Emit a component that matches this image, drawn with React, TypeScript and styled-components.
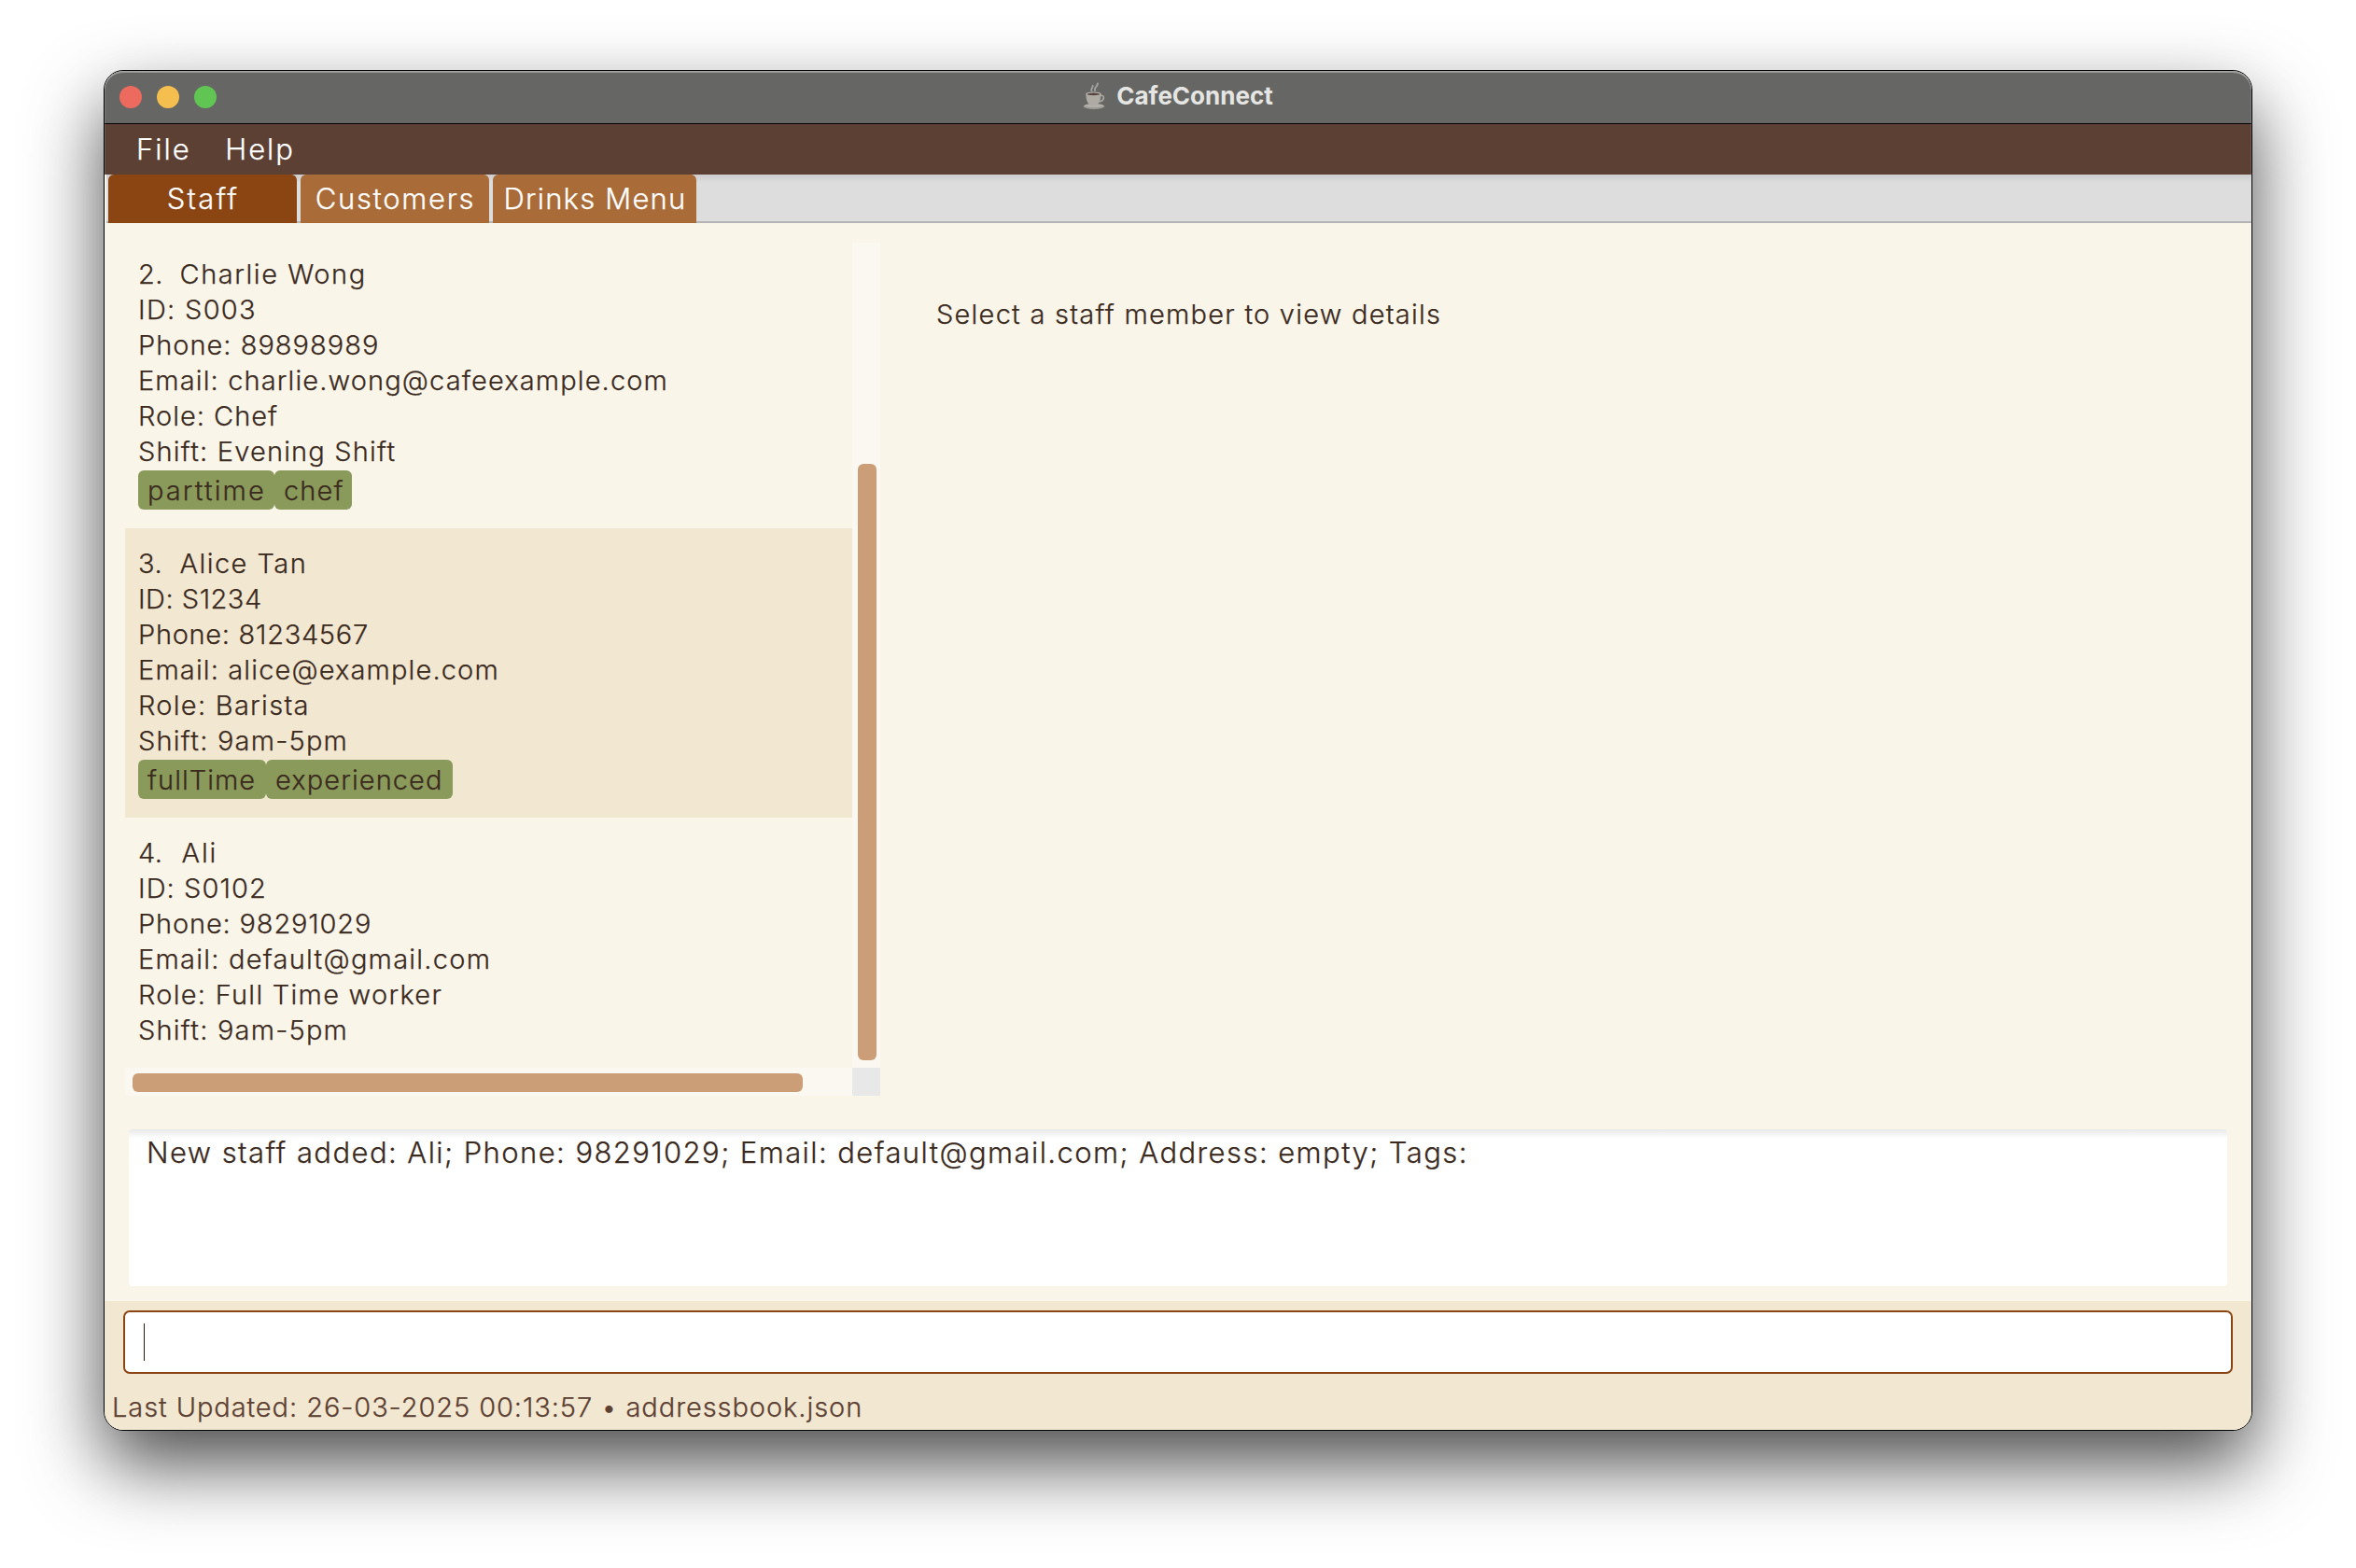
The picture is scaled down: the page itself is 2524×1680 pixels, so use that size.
import React from "react";
import styled, { createGlobalStyle } from "styled-components";

const GlobalStyle = createGlobalStyle`
  * { box-sizing: border-box; }
  body {
    margin: 0;
    background: #ffffff;
    font-family: Inter, "Liberation Sans", sans-serif;
    font-weight: 300;
    -webkit-text-stroke: 0.25px currentColor;
    color: #3b2a1e;
    overflow: hidden;
  }
`;

const Desktop = styled.div`
  width: 2524px;
  height: 1680px;
  padding: 75px 111px 0;
`;

const Window = styled.main`
  position: relative;
  display: flex;
  flex-direction: column;
  width: 2302px;
  height: 1458px;
  border: 1px solid #000000;
  border-radius: 21px;
  background: #faf5e9;
  overflow: hidden;
  box-shadow: 0 36px 80px rgba(0, 0, 0, 0.7);

  &::after {
    content: "";
    position: absolute;
    inset: 0;
    border-radius: 20px;
    box-shadow: inset 0 2px 0 rgba(255, 255, 255, 0.3), inset 0 0 0 1px rgba(255, 255, 255, 0.16);
    pointer-events: none;
  }
`;

const TitleBar = styled.header`
  display: grid;
  grid-template-columns: 1fr auto 1fr;
  align-items: center;
  height: 57px;
  padding: 0 16px;
  background: #666764;
  border-bottom: 1px solid #000000;
`;

const Lights = styled.div`
  display: flex;
  gap: 16px;
`;

const Light = styled.span<{ $color: string }>`
  width: 24px;
  height: 24px;
  border-radius: 50%;
  background: ${(p) => p.$color};
`;

const Title = styled.h1`
  display: flex;
  align-items: center;
  gap: 11px;
  margin: 0;
  height: 56px;
  padding-bottom: 2px;
  font-size: 26px;
  font-weight: 700;
  line-height: 54px;
  color: #e5e5e3;
  -webkit-text-stroke: 0;
`;

const MenuBar = styled.nav`
  display: flex;
  gap: 36.5px;
  height: 54px;
  padding-left: 34px;
  background: #5c4033;
  color: #ffffff;
`;

const MenuItem = styled.span<{ $track: number }>`
  font-size: 31px;
  line-height: 53px;
  letter-spacing: ${(p) => p.$track}px;
`;

const TabHeader = styled.div`
  display: flex;
  gap: 4px;
  height: 52px;
  margin-left: 2px;
  padding-left: 2px;
  background:
    linear-gradient(#b4b4b4, #b4b4b4) bottom / 100% 2px no-repeat,
    linear-gradient(#cdcdcd, #dddddd 9px);
`;

const Tab = styled.div<{ $width: number; $track: number; $active?: boolean }>`
  width: ${(p) => p.$width}px;
  padding-left: 1px;
  border-radius: 6px 6px 0 0;
  background: ${(p) => (p.$active ? "#8b4513" : "#a96b38")};
  color: #ffffff;
  font-size: 31px;
  line-height: 51px;
  letter-spacing: ${(p) => p.$track}px;
  text-align: center;
`;

const Content = styled.section`
  display: flex;
  height: 935px;
  padding: 21px 22px 0;
`;

const ListPane = styled.div`
  display: grid;
  grid-template-columns: 779px 30px;
  grid-template-rows: 884px 30px;
`;

const Viewport = styled.div`
  overflow: hidden;
`;

const ListBody = styled.div`
  margin-top: -4px;
`;

const Card = styled.article<{ $shaded?: boolean }>`
  height: 310px;
  padding: 19px 14px 0;
  background: ${(p) => (p.$shaded ? "#f2e7d0" : "transparent")};
`;

const Line = styled.div<{ $track: number }>`
  display: flex;
  height: 38px;
  font-size: 29px;
  line-height: 38px;
  letter-spacing: ${(p) => p.$track}px;
  white-space: pre;
`;

const Index = styled.span<{ $width: number }>`
  width: ${(p) => p.$width}px;
  letter-spacing: 0.5px;
`;

const Tags = styled.div`
  display: flex;
  margin-top: 1px;
`;

const Tag = styled.span<{ $width: number; $track: number }>`
  width: ${(p) => p.$width}px;
  height: 42px;
  padding-left: 10px;
  border-radius: 6px;
  background: #8a9a5b;
  font-size: 29px;
  line-height: 43px;
  letter-spacing: ${(p) => p.$track}px;
`;

const VerticalTrack = styled.div`
  padding: 237px 4px 8px 6px;
  background: #fbf8f1;
`;

const HorizontalTrack = styled.div`
  padding: 6px 53px 4px 8px;
  background: #fbf8f1;
`;

const Thumb = styled.div`
  width: 100%;
  height: 100%;
  border-radius: 6px;
  background: #cc9e78;
`;

const Corner = styled.div`
  background: #e8e8e8;
`;

const Detail = styled.p`
  margin: 58px 0 0 60px;
  font-size: 29px;
  line-height: 38px;
  letter-spacing: 1.24px;
`;

const ResultArea = styled.section`
  height: 220px;
  padding: 36px 26px 16px;
`;

const ResultBox = styled.div`
  height: 168px;
  padding: 5px 19px;
  border-radius: 4px;
  background: linear-gradient(#e9e9eb, #ffffff 10px);
  font-size: 31px;
  line-height: 40px;
  letter-spacing: 1.43px;
`;

const Footer = styled.footer`
  flex: 1;
  padding: 10px 20px 0;
  background: #f2e7d0;
`;

const CommandBox = styled.div`
  display: flex;
  align-items: center;
  height: 68px;
  padding-left: 20px;
  border: 2px solid #8b4513;
  border-radius: 7px;
  background: #ffffff;
`;

const Caret = styled.span`
  width: 1px;
  height: 40px;
  background: #2b1a10;
`;

const Status = styled.p`
  margin: 17px 0 0 -12px;
  font-size: 29px;
  line-height: 38px;
  letter-spacing: 0.92px;
  color: #5c4033;
`;

type Text = [string, number];
interface Staff {
  index: string;
  indexWidth: number;
  name: Text;
  lines: Text[];
  tags: [string, number, number][];
}

const staff: Staff[] = [
  {
    index: "2.",
    indexWidth: 44.5,
    name: ["Charlie Wong", 1.55],
    lines: [
      ["ID: S003", 1.3],
      ["Phone: 89898989", 1.0],
      ["Email: charlie.wong@cafeexample.com", 1.11],
      ["Role: Chef", 1.0],
      ["Shift: Evening Shift", 1.18],
    ],
    tags: [
      ["parttime", 146, 2.1],
      ["chef", 83, 1.1],
    ],
  },
  {
    index: "3.",
    indexWidth: 44.5,
    name: ["Alice Tan", 1.46],
    lines: [
      ["ID: S1234", 0.5],
      ["Phone: 81234567", 0.7],
      ["Email: alice@example.com", 1.13],
      ["Role: Barista", 1.28],
      ["Shift: 9am-5pm", 1.2],
    ],
    tags: [
      ["fullTime", 137, 1.03],
      ["experienced", 200, 1.08],
    ],
  },
  {
    index: "4.",
    indexWidth: 46.5,
    name: ["Ali", 1.9],
    lines: [
      ["ID: S0102", 1.08],
      ["Phone: 98291029", 0.84],
      ["Email: default@gmail.com", 1.24],
      ["Role: Full Time worker", 1.26],
      ["Shift: 9am-5pm", 1.2],
    ],
    tags: [],
  },
];

const CupIcon = () => (
  <svg width="25" height="30" viewBox="0 0 25 30" fill="none">
    <path d="M9.5 9.5c-1.600-2.200 1.600-3.200 1.200-5.500M13 9c-1.200-3 2.400-4 3-7.500" stroke="#a3a3a1" strokeWidth="1.900" strokeLinecap="round" />
    <ellipse cx="12" cy="26" rx="11.500" ry="2.900" fill="#9d9b95" />
    <ellipse cx="12" cy="25.200" rx="10" ry="1.900" fill="#b3b0a9" />
    <path d="M18.500 14.500c5-1.700 5.800 5.500-1.500 6.500" stroke="#aaa7a0" strokeWidth="1.700" />
    <path d="M3.300 12.500c0 6 1.700 10.200 4.700 12.500h6.600c3-2.300 4.900-6.500 4.900-12.500z" fill="#aeaba4" />
    <ellipse cx="11.400" cy="12.600" rx="8.100" ry="2.100" fill="#b9b6b0" />
    <ellipse cx="11.400" cy="12.900" rx="6.800" ry="1.300" fill="#57443e" />
  </svg>
);

export default function App() {
  return (
    <Desktop>
      <GlobalStyle />
      <Window>
        <TitleBar>
          <Lights>
            <Light $color="#ed6a5e" />
            <Light $color="#f5bf4f" />
            <Light $color="#61c554" />
          </Lights>
          <Title>
            <CupIcon />
            CafeConnect
          </Title>
        </TitleBar>
        <MenuBar>
          <MenuItem $track={2}>File</MenuItem>
          <MenuItem $track={2}>Help</MenuItem>
        </MenuBar>
        <TabHeader>
          <Tab $width={202} $track={2.2} $active>Staff</Tab>
          <Tab $width={202} $track={1.7}>Customers</Tab>
          <Tab $width={218} $track={1.2}>Drinks Menu</Tab>
        </TabHeader>
        <Content>
          <ListPane>
            <Viewport>
              <ListBody>
                {staff.map((s, i) => (
                  <Card key={s.index} $shaded={i % 2 === 1}>
                    <Line $track={s.name[1]}>
                      <Index $width={s.indexWidth}>{s.index}</Index>
                      {s.name[0]}
                    </Line>
                    {s.lines.map(([text, track]) => (
                      <Line key={text} $track={track}>{text}</Line>
                    ))}
                    <Tags>
                      {s.tags.map(([text, width, track]) => (
                        <Tag key={text} $width={width} $track={track}>{text}</Tag>
                      ))}
                    </Tags>
                  </Card>
                ))}
              </ListBody>
            </Viewport>
            <VerticalTrack><Thumb /></VerticalTrack>
            <HorizontalTrack><Thumb /></HorizontalTrack>
            <Corner />
          </ListPane>
          <Detail>Select a staff member to view details</Detail>
        </Content>
        <ResultArea>
          <ResultBox>
            New staff added: Ali; Phone: 98291029; Email: default@gmail.com; Address: empty; Tags:
          </ResultBox>
        </ResultArea>
        <Footer>
          <CommandBox>
            <Caret />
          </CommandBox>
          <Status>Last Updated: 26-03-2025 00:13:57 • addressbook.json</Status>
        </Footer>
      </Window>
    </Desktop>
  );
}
